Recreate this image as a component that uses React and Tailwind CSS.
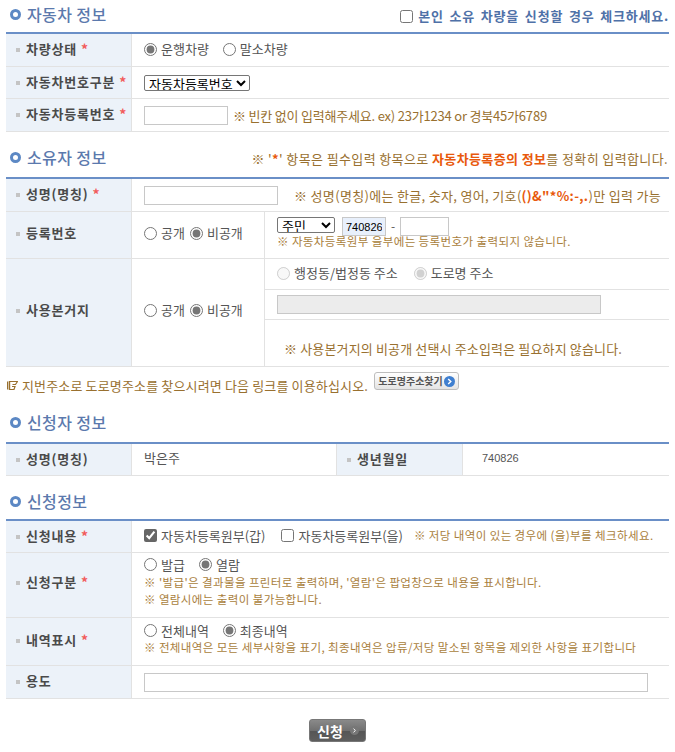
import React from 'react';

const FONT = 'font-["Noto_Sans_CJK_KR","Liberation_Sans",sans-serif]';

function SectionTitle({ className, children, right }) {
  return (
    <div className={`flex items-center justify-between ${className}`}>
      <div className="flex items-center pl-[4px]">
        <span className="w-[11px] h-[11px] rounded-full border-[3px] border-[#5c88c4] bg-white mr-[6px]" />
        <h3 className="text-[16px] font-medium text-[#5b79ad] tracking-[0.4px] leading-none pb-[1px]">{children}</h3>
      </div>
      {right}
    </div>
  );
}

function Label({ children, required, className = 'pb-[2px]' }) {
  return (
    <div className={`w-[126px] shrink-0 flex items-center pl-[10px] bg-[#ecf2f9] border-r border-[#e2e2e2] ${className}`}>
      <span className="w-[4px] h-[4px] bg-[#c4c4c4] mr-[6px] mt-[2px]" />
      <span className="text-[13px] font-bold text-[#4a4a4a] tracking-[0.8px]">{children}</span>
      {required && <span className="ml-[4px] text-[14px] font-bold text-[#f25c5c] leading-none">*</span>}
    </div>
  );
}

function Radio({ checked, disabled, label, className = '' }) {
  return (
    <label className={`inline-flex items-center text-[13px] text-[#555] ${className}`}>
      <input type="radio" defaultChecked={checked} disabled={disabled} className="w-[13px] h-[13px] m-0 mr-[4px] accent-[#767676]" />
      {label}
    </label>
  );
}

function Note({ children, className = '' }) {
  return <p className={`text-[#99702f] text-[13px] leading-none ${className}`}>{children}</p>;
}

function SmallNote({ children, className = '' }) {
  return <p className={`text-[#a97e3c] text-[11.5px] tracking-[0.4px] leading-[17px] ${className}`}>{children}</p>;
}

const textInput = 'border border-[#c8c8c8] h-[19px] bg-white text-[12px] px-[2px] outline-none';
const selectBox = 'h-[16px] border border-[#767676] rounded-[2px] text-[13px] leading-none text-black bg-white font-["Liberation_Sans","Noto_Sans_CJK_KR",sans-serif]';

export default function App() {
  return (
    <div className={`w-[675px] h-[752px] pl-[6px] pr-[6px] bg-white overflow-hidden ${FONT}`}>
      {/* 자동차 정보 */}
      <SectionTitle
        className="h-[32px] pb-[3px]"
        right={
          <label className="flex items-center pt-[3px]">
            <input type="checkbox" className="w-[13px] h-[13px] m-0 mr-[5px]" />
            <span className="text-[13px] font-bold text-[#4f71a8] tracking-[0.8px] [word-spacing:2px]">본인 소유 차량을 신청할 경우 체크하세요.</span>
          </label>
        }
      >
        자동차 정보
      </SectionTitle>
      <div className="border-t-2 border-[#6a8fc7]">
        <div className="flex h-[33px] border-b border-[#e2e2e2]">
          <Label required>차량상태</Label>
          <div className="flex items-center pl-[12px] pb-[2px] gap-[14px]">
            <Radio checked label="운행차량" />
            <Radio label="말소차량" />
          </div>
        </div>
        <div className="flex h-[32px] border-b border-[#e2e2e2]">
          <Label required>자동차번호구분</Label>
          <div className="flex items-center pl-[12px]">
            <select className={`${selectBox} w-[106px]`}>
              <option>자동차등록번호</option>
            </select>
          </div>
        </div>
        <div className="flex h-[33px] border-b border-[#e2e2e2]">
          <Label required>자동차등록번호</Label>
          <div className="flex items-center pl-[12px]">
            <input className={`${textInput} w-[84px]`} />
            <Note className="ml-[5px] tracking-[-0.2px]">※ 빈칸 없이 입력해주세요. ex) 23가1234 or 경북45가6789</Note>
          </div>
        </div>
      </div>

      {/* 소유자 정보 */}
      <SectionTitle
        className="h-[45px] pt-[5px]"
        right={
          <Note className="pr-[1px] pt-[2px] tracking-[0.38px]">
            ※ '<span className="text-[#e8590c] font-bold">*</span>' 항목은 필수입력 항목으로{' '}
            <span className="text-[#e8590c] font-bold">자동차등록증의 정보</span>를 정확히 입력합니다.
          </Note>
        }
      >
        소유자 정보
      </SectionTitle>
      <div className="border-t-2 border-[#6a8fc7]">
        <div className="flex h-[33px] border-b border-[#e2e2e2]">
          <Label required>성명(명칭)</Label>
          <div className="flex items-center pl-[12px]">
            <input className={`${textInput} w-[134px]`} />
            <Note className="ml-[16px] tracking-[0.33px]">
              ※ 성명(명칭)에는 한글, 숫자, 영어, 기호(<span className="text-[#e8590c] font-bold">()&amp;"*%:-,.</span>)만 입력 가능
            </Note>
          </div>
        </div>
        <div className="flex h-[47px] border-b border-[#e2e2e2]">
          <Label className="pb-[5px]">등록번호</Label>
          <div className="w-[133px] shrink-0 flex items-center pl-[12px] pb-[4px] border-r border-[#e2e2e2]">
            <Radio label="공개" className="mr-[5px]" />
            <Radio checked label="비공개" />
          </div>
          <div className="pl-[12px] pt-[5px]">
            <div className="flex items-start h-[19px]">
              <select className={`${selectBox} w-[58px]`}>
                <option>주민</option>
              </select>
              <input defaultValue="740826" className="ml-[7px] w-[44px] h-[19px] border border-[#c8c8c8] bg-[#e8f0fc] text-[11px] text-black px-[3px] font-['Liberation_Sans',sans-serif] outline-none" />
              <span className="mx-[5px] text-[12px] leading-[18px] text-[#555]">-</span>
              <input className="w-[49px] h-[19px] border border-[#c8c8c8]" />
            </div>
            <SmallNote className="-mt-[3px]">※ 자동차등록원부 을부에는 등록번호가 출력되지 않습니다.</SmallNote>
          </div>
        </div>
        <div className="flex h-[108px] border-b border-[#e2e2e2]">
          <Label className="pb-[6px]">사용본거지</Label>
          <div className="w-[133px] shrink-0 flex items-center pl-[12px] pb-[5px] border-r border-[#e2e2e2]">
            <Radio label="공개" className="mr-[5px]" />
            <Radio checked label="비공개" />
          </div>
          <div className="flex-1 flex flex-col">
            <div className="h-[31px] flex items-center pl-[12px] border-b border-[#e2e2e2] pb-[2px]">
              <Radio disabled label="행정동/법정동 주소" className="mr-[16px]" />
              <Radio disabled checked label="도로명 주소" />
            </div>
            <div className="h-[30px] flex items-center pl-[12px] border-b border-[#e2e2e2]">
              <div className="w-[324px] h-[19px] border border-[#c8c8c8] bg-[#ececec]" />
            </div>
            <div className="flex-1 flex items-end pl-[19px] pb-[11px]">
              <Note className="tracking-[0.15px]">※ 사용본거지의 비공개 선택시 주소입력은 필요하지 않습니다.</Note>
            </div>
          </div>
        </div>
      </div>

      {/* 도로명주소 안내 */}
      <div className="h-[36px] flex items-center pl-[1px]">
        <svg width="11" height="11" viewBox="0 0 11 11" fill="none" stroke="#99702f" className="mr-[4px] shrink-0">
          <path d="M.5 1.5v8M2.5 1v9" strokeWidth="1.4" />
          <path d="M2.5 1.5h8l-2 3h-3M5 6.5h3l-1 3H2.5" strokeWidth="1.2" />
        </svg>
        <Note className="tracking-[0.15px]">지번주소로 도로명주소를 찾으시려면 다음 링크를 이용하십시오.</Note>
        <button className="ml-[6px] -mt-[8px] w-[85px] h-[18px] flex items-center justify-center rounded-[3px] border border-[#bdbdbd] bg-gradient-to-b from-white to-[#e4e4e4] text-[10px] font-bold text-[#555] leading-none">
          도로명주소찾기
          <span className="ml-[1px] w-[11px] h-[11px] rounded-full bg-[#3f7fd0] flex items-center justify-center">
            <svg width="7" height="7" viewBox="0 0 7 7" fill="none" stroke="white" strokeWidth="1.4"><path d="M2.2 1 4.8 3.5 2.2 6" /></svg>
          </span>
        </button>
      </div>

      {/* 신청자 정보 */}
      <SectionTitle className="h-[39px]">신청자 정보</SectionTitle>
      <div className="border-t-2 border-[#6a8fc7]">
        <div className="flex h-[32px] border-b border-[#e2e2e2]">
          <Label>성명(명칭)</Label>
          <div className="w-[205px] shrink-0 flex items-center pl-[12px] pb-[4px] text-[13px] text-[#555] border-r border-[#e2e2e2]">박은주</div>
          <Label>생년월일</Label>
          <div className="flex items-center pl-[19px] pb-[2px] text-[11px] text-[#555] font-['Liberation_Sans',sans-serif]">740826</div>
        </div>
      </div>

      {/* 신청정보 */}
      <SectionTitle className="h-[43px] pt-[7px]">신청정보</SectionTitle>
      <div className="border-t-2 border-[#6a8fc7]">
        <div className="flex h-[32px] border-b border-[#e2e2e2]">
          <Label required>신청내용</Label>
          <div className="flex items-center pl-[12px] pb-[2px]">
            <label className="inline-flex items-center text-[13px] text-[#555] mr-[16px]">
              <input type="checkbox" defaultChecked className="w-[13px] h-[13px] m-0 mr-[4px] accent-[#666]" />
              자동차등록원부(갑)
            </label>
            <label className="inline-flex items-center text-[13px] text-[#555] mr-[11px]">
              <input type="checkbox" className="w-[13px] h-[13px] m-0 mr-[4px]" />
              자동차등록원부(을)
            </label>
            <SmallNote>※ 저당 내역이 있는 경우에 (을)부를 체크하세요.</SmallNote>
          </div>
        </div>
        <div className="flex h-[65px] border-b border-[#e2e2e2]">
          <Label required className="pb-[6px]">신청구분</Label>
          <div className="pl-[12px] pt-[3px]">
            <div className="flex items-center h-[17px] mb-[1px]">
              <Radio label="발급" className="mr-[14px]" />
              <Radio checked label="열람" />
            </div>
            <SmallNote>※ '발급'은 결과물을 프린터로 출력하며, '열람'은 팝업창으로 내용을 표시합니다.</SmallNote>
            <SmallNote>※ 열람시에는 출력이 불가능합니다.</SmallNote>
          </div>
        </div>
        <div className="flex h-[48px] border-b border-[#e2e2e2]">
          <Label required className="pb-[4px]">내역표시</Label>
          <div className="pl-[12px] pt-[4px]">
            <div className="flex items-center h-[17px]">
              <Radio label="전체내역" className="mr-[14px]" />
              <Radio checked label="최종내역" />
            </div>
            <SmallNote>※ 전체내역은 모든 세부사항을 표기, 최종내역은 압류/저당 말소된 항목을 제외한 사항을 표기합니다</SmallNote>
          </div>
        </div>
        <div className="flex h-[33px] border-b border-[#e2e2e2]">
          <Label>용도</Label>
          <div className="flex items-center pl-[12px]">
            <input className={`${textInput} w-[504px]`} />
          </div>
        </div>
      </div>

      <div className="flex justify-center pt-[20px] pr-[1px]">
        <button className="w-[57px] h-[23px] pl-[2px] flex items-center justify-center rounded-[3px] border border-[#777] bg-[linear-gradient(#8a8a8a_0%,#707070_50%,#555_50%,#5e5e5e_100%)] text-[14px] font-bold text-white leading-none">
          신청
          <span className="ml-[7px] w-[9px] h-[9px] rounded-full bg-[#777] flex items-center justify-center">
            <svg width="5" height="5" viewBox="0 0 5 5" fill="none" stroke="white" strokeWidth="1"><path d="M1.5.7 3.4 2.5 1.5 4.3" /></svg>
          </span>
        </button>
      </div>
    </div>
  );
}
